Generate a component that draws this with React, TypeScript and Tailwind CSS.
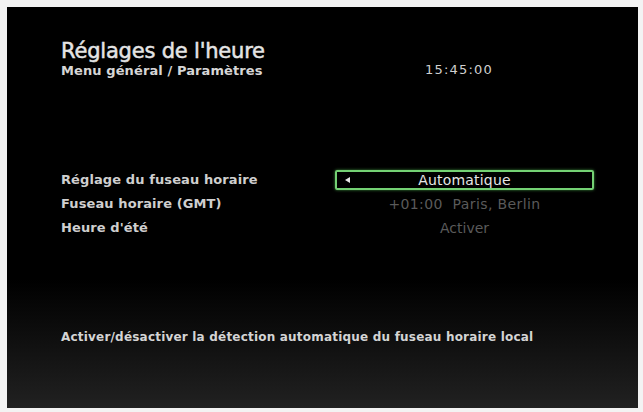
import React from "react";

const font = { fontFamily: '"DejaVu Sans", Verdana, sans-serif' };

export default function App() {
  return (
    <div className="w-[643px] h-[412px] bg-[#f3f3f3] pt-[7px] pl-[7px] pr-[5px] pb-[4px]" style={font}>
      <div className="h-full flex flex-col bg-[linear-gradient(to_bottom,#000_0%,#000_68%,#0c0c0c_80%,#212121_100%)] pl-[54px]">
        <div className="flex items-end pt-[32px]">
          <div className="w-[364px] flex flex-col">
            <div className="text-[21px] leading-[24px] text-[#e4e4e4] tracking-[-0.2px] [-webkit-text-stroke:0.5px_#e4e4e4]">Réglages de l'heure</div>
            <div className="text-[13px] leading-[15px] font-bold text-[#d6d6d6] tracking-[0.1px]">Menu général / Paramètres</div>
          </div>
          <div className="text-[13px] leading-[15px] text-[#d0d0d0] tracking-[1.2px] pb-[1px]">15:45:00</div>
        </div>

        <div className="mt-[90px] grid grid-cols-[274px_259px] text-[13px] font-bold">
          <div className="h-[24px] flex items-center text-[#cfcfcf] tracking-[0.1px]">Réglage du fuseau horaire</div>
          <div className="h-[24px] flex items-center">
            <div className="relative w-full h-[20px] border-2 border-[#74d174] rounded-[2px] flex items-center justify-center shadow-[0_0_3px_#3f8f3f]">
              <span className="absolute left-[8px] top-1/2 -translate-y-1/2 w-0 h-0 border-y-[3px] border-y-transparent border-r-[5px] border-r-[#e8e8e8]" />
              <span className="text-[#e6e6e6] font-normal text-[14px] leading-none tracking-[0.2px]">Automatique</span>
            </div>
          </div>
          <div className="h-[24px] flex items-center text-[#cfcfcf] tracking-[0.1px]">Fuseau horaire (GMT)</div>
          <div className="h-[24px] flex items-center justify-center text-[#5a5a5a] font-normal text-[14px] tracking-[0.4px]">+01:00&nbsp; Paris, Berlin</div>
          <div className="h-[24px] flex items-center text-[#cfcfcf] tracking-[0.1px]">Heure d'été</div>
          <div className="h-[24px] flex items-center justify-center text-[#5a5a5a] font-normal text-[14px]">Activer</div>
        </div>

        <div className="mt-[90px] text-[12px] leading-[14px] font-bold text-[#d4d4d4] tracking-[0.2px]">
          Activer/désactiver la détection automatique du fuseau horaire local
        </div>
      </div>
    </div>
  );
}
